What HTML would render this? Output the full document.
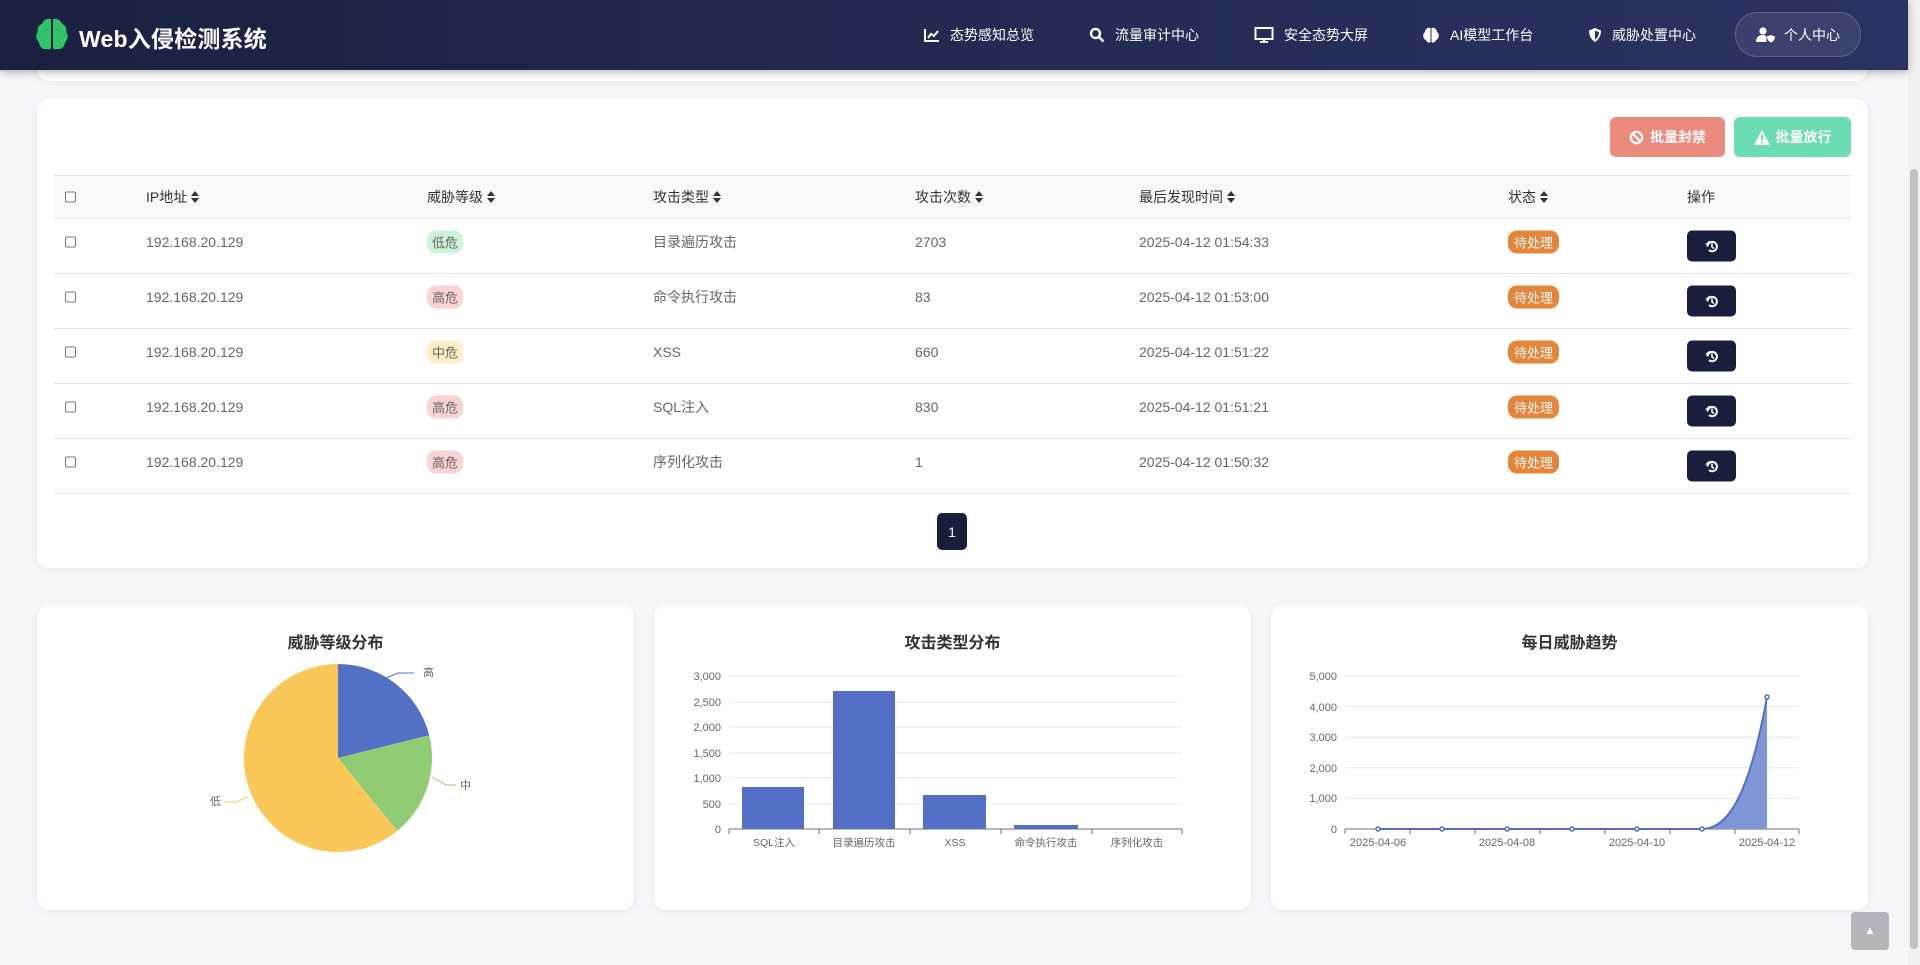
<!DOCTYPE html>
<html><head><meta charset="utf-8"><style>
*{box-sizing:border-box;margin:0;padding:0}
body{width:1920px;height:965px;overflow:hidden;background:#f5f7fa;font-family:"Liberation Sans","Noto Sans CJK SC",sans-serif;position:relative;color:#555}
.nav{position:absolute;left:0;top:0;width:1908px;height:70px;background:linear-gradient(90deg,#1b2040,#2b3262);box-shadow:0 2px 8px rgba(0,0,0,.3);z-index:5}
.logo{position:absolute;left:34px;top:16px}
.title{position:absolute;left:79px;top:20px;color:#fff;font-weight:bold;font-size:23px;letter-spacing:0.2px}
.ni{position:absolute;top:25px;color:#fff;font-size:14px;display:flex;align-items:center;gap:10px}
.me{position:absolute;left:1735px;top:12px;width:126px;height:45px;border-radius:22px;background:rgba(255,255,255,.08);border:1px solid rgba(255,255,255,.18);color:#fff;font-size:14px;display:flex;align-items:center;justify-content:center;gap:8px}
.card{position:absolute;background:#fff;border-radius:12px;box-shadow:0 2px 10px rgba(0,0,0,.06)}
.btn{position:absolute;top:117px;height:40px;border-radius:6px;color:#fff;font-weight:bold;font-size:14px;display:flex;align-items:center;justify-content:center;gap:6px}
.th{position:absolute;left:54px;top:175px;width:1797px;height:44px;background:#f8f9fa;border-top:1px solid #e3e6ea;border-bottom:1px solid #e3e6ea}
.row{position:absolute;left:54px;width:1797px;height:55px;border-bottom:1px solid #e3e6ea}
.c{position:absolute;top:50%;transform:translateY(-50%);font-size:14px;white-space:nowrap;display:flex;align-items:center}
.row .c{top:calc(50% - 4px)}
.th .c{color:#333}
.row .c{color:#666}
.cb{width:11px;height:11px;border:1px solid #777;border-radius:2px;background:#fff}
.s{margin-left:4px}
.bd{padding:2px 5px;border-radius:9px;font-size:13px}
.low{background:#cdf3d6;color:#2d8a47}.high{background:#fbd3d3;color:#c23b3b}.mid{background:#fdefc3;color:#a5720e}
.row .st{background:#e5853a;color:#fff;padding:2px 6px;border-radius:9px;font-size:13px}
.row .op{top:50%;width:49px;height:31px;background:#1a1e3d;border-radius:5px;justify-content:center}
.ct{position:absolute;top:24px;width:100%;text-align:center;font-weight:bold;font-size:16px;color:#333}
</style></head><body>
<div class="nav">
<svg class="logo" width="36" height="36" viewBox="0 0 36 36"><path d="M17 3C12 2 9 5 8 8 4 9 3 13 4 16 1 19 2 24 5 26 5 31 9 34 13 33 15 34 17 33 17 32Z M19 3C24 2 27 5 28 8 32 9 33 13 32 16 35 19 34 24 31 26 31 31 27 34 23 33 21 34 19 33 19 32Z" fill="#2fc36a"/></svg>
<div class="title">Web入侵检测系统</div>
<div class="ni" style="left:924px"><svg width="16" height="14" viewBox="0 0 16 14"><path d="M1 1V13H15" stroke="#fff" stroke-width="2" fill="none"/><path d="M4 10L7 6 10 8 14 3" stroke="#fff" stroke-width="2" fill="none"/></svg>态势感知总览</div>
<div class="ni" style="left:1089px"><svg width="16" height="16" viewBox="0 0 16 16"><circle cx="6.5" cy="6.5" r="4.5" stroke="#fff" stroke-width="2.4" fill="none"/><path d="M10 10L14.5 14.5" stroke="#fff" stroke-width="2.6"/></svg>流量审计中心</div>
<div class="ni" style="left:1254px"><svg width="20" height="16" viewBox="0 0 20 16"><rect x="1.5" y="1" width="17" height="11" stroke="#fff" stroke-width="2" fill="none"/><path d="M6 15H14M10 12V15" stroke="#fff" stroke-width="2"/></svg>安全态势大屏</div>
<div class="ni" style="left:1422px"><svg width="18" height="16" viewBox="0 0 18 16"><path d="M8.5 1C5 0 3 3 3 5 0 7 1 12 4 13 5 16 8 16 8.5 15Z M9.5 1C13 0 15 3 15 5 18 7 17 12 14 13 13 16 10 16 9.5 15Z" fill="#fff"/></svg>AI模型工作台</div>
<div class="ni" style="left:1588px"><svg width="14" height="16" viewBox="0 0 14 16"><path d="M7 1L13 3.5C13 9 10.5 13 7 15 3.5 13 1 9 1 3.5Z" fill="#fff"/><path d="M7 3.5V12.5C9 11 10.8 9 11 5.2Z" fill="#2a3160"/></svg>威胁处置中心</div>
<div class="me"><svg width="20" height="16" viewBox="0 0 20 16"><circle cx="7" cy="4" r="3.6" fill="#fff"/><path d="M0 15C0 10 3 8 7 8 9 8 10 9 10.5 9.5V15Z" fill="#fff"/><path d="M15 8L19 9.5C19 12.5 17 14.5 15 15.5 13 14.5 11 12.5 11 9.5Z" fill="#fff"/></svg>个人中心</div>
</div>
<div class="card" style="left:37px;top:40px;width:1831px;height:41px;border-radius:0 0 12px 12px"></div>
<div class="card" style="left:37px;top:99px;width:1831px;height:469px"></div>
<div class="btn" style="left:1610px;width:115px;background:#ec8a7e"><svg width="15" height="15" viewBox="0 0 16 16"><circle cx="8" cy="8" r="6" stroke="#fff" stroke-width="2.4" fill="none"/><path d="M4 4L12 12" stroke="#fff" stroke-width="2.4"/></svg>批量封禁</div>
<div class="btn" style="left:1734px;width:117px;background:#6cdcb1"><svg width="16" height="15" viewBox="0 0 16 15"><path d="M8 0L16 15H0Z" fill="#fff"/><path d="M8 5V10M8 11.5V13" stroke="#6cdcb1" stroke-width="2"/></svg>批量放行</div>
<div class="th">
<div class="c cb" style="left:11px"></div>
<div class="c" style="left:92px">IP地址<svg class="s" width="8" height="12" viewBox="0 0 8 12"><path d="M0 5L4 0 8 5ZM0 7L4 12 8 7Z" fill="#333"/></svg></div>
<div class="c" style="left:373px">威胁等级<svg class="s" width="8" height="12" viewBox="0 0 8 12"><path d="M0 5L4 0 8 5ZM0 7L4 12 8 7Z" fill="#333"/></svg></div>
<div class="c" style="left:599px">攻击类型<svg class="s" width="8" height="12" viewBox="0 0 8 12"><path d="M0 5L4 0 8 5ZM0 7L4 12 8 7Z" fill="#333"/></svg></div>
<div class="c" style="left:861px">攻击次数<svg class="s" width="8" height="12" viewBox="0 0 8 12"><path d="M0 5L4 0 8 5ZM0 7L4 12 8 7Z" fill="#333"/></svg></div>
<div class="c" style="left:1085px">最后发现时间<svg class="s" width="8" height="12" viewBox="0 0 8 12"><path d="M0 5L4 0 8 5ZM0 7L4 12 8 7Z" fill="#333"/></svg></div>
<div class="c" style="left:1454px">状态<svg class="s" width="8" height="12" viewBox="0 0 8 12"><path d="M0 5L4 0 8 5ZM0 7L4 12 8 7Z" fill="#333"/></svg></div>
<div class="c" style="left:1633px">操作</div>
</div>
<div class="row" style="top:219px"><div class="c cb" style="left:11px"></div><div class="c" style="left:92px">192.168.20.129</div><div class="c bd low" style="left:373px">低危</div><div class="c" style="left:599px">目录遍历攻击</div><div class="c" style="left:861px">2703</div><div class="c" style="left:1085px">2025-04-12 01:54:33</div><div class="c st" style="left:1454px">待处理</div><div class="c op" style="left:1633px"><svg width="14" height="14" viewBox="0 0 14 14"><path d="M2.5 7A4.7 4.7 0 1 1 4 10.5" stroke="#fff" stroke-width="2" fill="none"/><path d="M0 5H4.5V1Z" fill="#fff"/><path d="M7 4V7.5L9 9" stroke="#fff" stroke-width="1.6" fill="none"/></svg></div></div>
<div class="row" style="top:274px"><div class="c cb" style="left:11px"></div><div class="c" style="left:92px">192.168.20.129</div><div class="c bd high" style="left:373px">高危</div><div class="c" style="left:599px">命令执行攻击</div><div class="c" style="left:861px">83</div><div class="c" style="left:1085px">2025-04-12 01:53:00</div><div class="c st" style="left:1454px">待处理</div><div class="c op" style="left:1633px"><svg width="14" height="14" viewBox="0 0 14 14"><path d="M2.5 7A4.7 4.7 0 1 1 4 10.5" stroke="#fff" stroke-width="2" fill="none"/><path d="M0 5H4.5V1Z" fill="#fff"/><path d="M7 4V7.5L9 9" stroke="#fff" stroke-width="1.6" fill="none"/></svg></div></div>
<div class="row" style="top:329px"><div class="c cb" style="left:11px"></div><div class="c" style="left:92px">192.168.20.129</div><div class="c bd mid" style="left:373px">中危</div><div class="c" style="left:599px">XSS</div><div class="c" style="left:861px">660</div><div class="c" style="left:1085px">2025-04-12 01:51:22</div><div class="c st" style="left:1454px">待处理</div><div class="c op" style="left:1633px"><svg width="14" height="14" viewBox="0 0 14 14"><path d="M2.5 7A4.7 4.7 0 1 1 4 10.5" stroke="#fff" stroke-width="2" fill="none"/><path d="M0 5H4.5V1Z" fill="#fff"/><path d="M7 4V7.5L9 9" stroke="#fff" stroke-width="1.6" fill="none"/></svg></div></div>
<div class="row" style="top:384px"><div class="c cb" style="left:11px"></div><div class="c" style="left:92px">192.168.20.129</div><div class="c bd high" style="left:373px">高危</div><div class="c" style="left:599px">SQL注入</div><div class="c" style="left:861px">830</div><div class="c" style="left:1085px">2025-04-12 01:51:21</div><div class="c st" style="left:1454px">待处理</div><div class="c op" style="left:1633px"><svg width="14" height="14" viewBox="0 0 14 14"><path d="M2.5 7A4.7 4.7 0 1 1 4 10.5" stroke="#fff" stroke-width="2" fill="none"/><path d="M0 5H4.5V1Z" fill="#fff"/><path d="M7 4V7.5L9 9" stroke="#fff" stroke-width="1.6" fill="none"/></svg></div></div>
<div class="row" style="top:439px"><div class="c cb" style="left:11px"></div><div class="c" style="left:92px">192.168.20.129</div><div class="c bd high" style="left:373px">高危</div><div class="c" style="left:599px">序列化攻击</div><div class="c" style="left:861px">1</div><div class="c" style="left:1085px">2025-04-12 01:50:32</div><div class="c st" style="left:1454px">待处理</div><div class="c op" style="left:1633px"><svg width="14" height="14" viewBox="0 0 14 14"><path d="M2.5 7A4.7 4.7 0 1 1 4 10.5" stroke="#fff" stroke-width="2" fill="none"/><path d="M0 5H4.5V1Z" fill="#fff"/><path d="M7 4V7.5L9 9" stroke="#fff" stroke-width="1.6" fill="none"/></svg></div></div>
<div style="position:absolute;left:937px;top:513px;width:30px;height:37px;background:#1a1e3d;border-radius:5px;color:#fff;font-size:14px;display:flex;align-items:center;justify-content:center">1</div>

<div class="card" style="left:37px;top:605px;width:597px;height:305px"><div class="ct">威胁等级分布</div></div>
<div class="card" style="left:654px;top:605px;width:597px;height:305px"><div class="ct">攻击类型分布</div></div>
<div class="card" style="left:1271px;top:605px;width:597px;height:305px"><div class="ct">每日威胁趋势</div></div>

<svg style="position:absolute;left:0;top:0" width="1920" height="965" font-family="Liberation Sans, Noto Sans CJK SC, sans-serif" font-size="11" fill="#666">
<path d="M338 758L338 664A94 94 0 0 1 429.2 735.3Z" fill="#5470c6"/>
<path d="M338 758L429.2 735.3A94 94 0 0 1 397.2 831Z" fill="#91cc75"/>
<path d="M338 758L397.2 831A94 94 0 1 1 338 664Z" fill="#fac858"/>
<path d="M386 678L398 673H414" stroke="#5470c6" fill="none"/><text x="423" y="676">高</text>
<path d="M432 777L446 785H456" stroke="#91cc75" fill="none"/><text x="460" y="789">中</text>
<path d="M248 797L236 802H224" stroke="#fac858" fill="none"/><text x="210" y="805">低</text>
<g stroke="#e6e8ec"><path d="M729 676H1182M729 702H1182M729 727H1182M729 753H1182M729 778H1182M729 804H1182"/></g>
<path d="M729 829H1182" stroke="#6e7079"/>
<g stroke="#6e7079"><path d="M729 829v5M819 829v5M910 829v5M1001 829v5M1092 829v5M1182 829v5"/></g>
<g text-anchor="end"><text x="721" y="680">3,000</text><text x="721" y="706">2,500</text><text x="721" y="731">2,000</text><text x="721" y="757">1,500</text><text x="721" y="782">1,000</text><text x="721" y="808">500</text><text x="721" y="833">0</text></g>
<rect x="742" y="787" width="62" height="42" fill="#5470c6"/>
<rect x="833" y="691" width="62" height="138" fill="#5470c6"/>
<rect x="923" y="795" width="63" height="34" fill="#5470c6"/>
<rect x="1014" y="825" width="64" height="4" fill="#5470c6"/>
<g text-anchor="middle" font-size="10.5"><text x="774" y="846">SQL注入</text><text x="864" y="846">目录遍历攻击</text><text x="955" y="846">XSS</text><text x="1046" y="846">命令执行攻击</text><text x="1137" y="846">序列化攻击</text></g>
<g stroke="#e6e8ec"><path d="M1345 676H1799M1345 706.6H1799M1345 737.2H1799M1345 767.8H1799M1345 798.4H1799"/></g>
<path d="M1345 829H1799" stroke="#6e7079"/>
<g stroke="#6e7079"><path d="M1345 829v5M1410 829v5M1475 829v5M1540 829v5M1605 829v5M1670 829v5M1735 829v5M1799 829v5"/></g>
<g text-anchor="end"><text x="1337" y="680">5,000</text><text x="1337" y="711">4,000</text><text x="1337" y="741">3,000</text><text x="1337" y="772">2,000</text><text x="1337" y="802">1,000</text><text x="1337" y="833">0</text></g>
<path d="M1378 829H1702C1730 829 1750 790 1767 697V829Z" fill="#8096d6"/>
<path d="M1378 829H1702C1730 829 1750 790 1767 697" stroke="#5470c6" stroke-width="2" fill="none"/>
<g fill="#fff" stroke="#5470c6" stroke-width="1.5"><circle cx="1378" cy="829" r="2"/><circle cx="1442" cy="829" r="2"/><circle cx="1507" cy="829" r="2"/><circle cx="1572" cy="829" r="2"/><circle cx="1637" cy="829" r="2"/><circle cx="1702" cy="829" r="2"/><circle cx="1767" cy="697" r="2"/></g>
<g text-anchor="middle"><text x="1378" y="846">2025-04-06</text><text x="1507" y="846">2025-04-08</text><text x="1637" y="846">2025-04-10</text><text x="1767" y="846">2025-04-12</text></g>
</svg>
<div style="position:absolute;left:1851px;top:912px;width:38px;height:38px;background:#b3b6bb;border-radius:4px;color:#fff;font-size:11px;display:flex;align-items:center;justify-content:center">▲</div>
<div style="position:absolute;left:1908px;top:0;width:12px;height:965px;background:#f1f1f1"></div>
<div style="position:absolute;left:1910px;top:169px;width:8px;height:780px;background:#c1c1c1;border-radius:4px"></div>
</body></html>
